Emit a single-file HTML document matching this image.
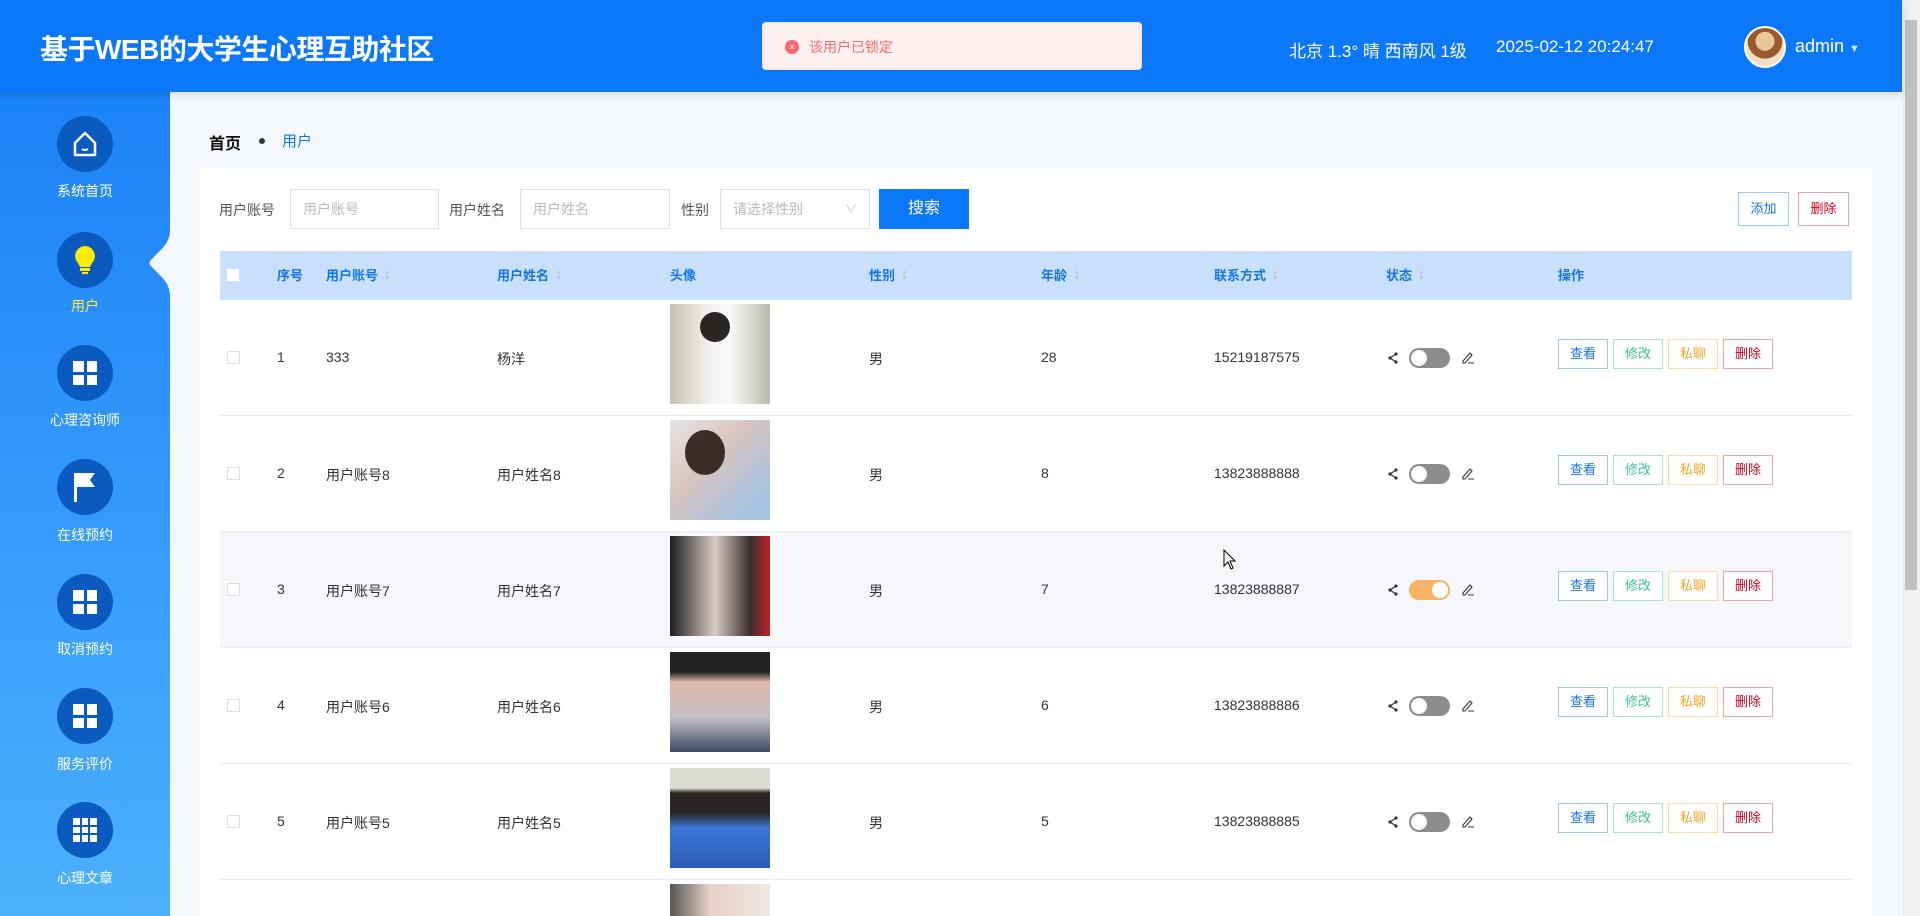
<!DOCTYPE html>
<html style="width:1920px;height:916px;overflow:hidden"><head><meta charset="utf-8"><style>
*{margin:0;padding:0;box-sizing:border-box}
body{width:1920px;height:916px;overflow:hidden;background:#f4f8fd;font-family:"Liberation Sans","Noto Sans CJK SC",sans-serif;font-size:14px;color:#333;position:relative}
.a{position:absolute}
.hdr{left:0;top:0;width:1902px;height:92px;background:#0b78fa;box-shadow:0 2px 8px rgba(0,0,0,.15);z-index:3}
.sb{left:0;top:92px;width:170px;height:824px;background:linear-gradient(#1c82f8,#4cb1fd)}
.ic{left:57px;width:56px;height:56px;border-radius:50%;background:#0b5ac0}
.lb{left:0;width:170px;text-align:center;color:#fff;font-size:14px}
.g4{position:absolute;left:16px;top:16px;width:24px;height:24px;display:grid;grid-template-columns:1fr 1fr;gap:3px}
.g4 i,.g9 i{background:#fff;display:block}
.g9{position:absolute;left:16px;top:16px;width:24px;height:24px;display:grid;grid-template-columns:1fr 1fr 1fr;gap:2px}
.inp{height:40px;border:1px solid #dcdfe6;background:#fff;color:#bbb;font-size:14px;line-height:38px;padding-left:12px}
.th{top:251px;height:49px;line-height:49px;color:#1574e8;font-weight:bold;font-size:13px}
.sort{display:inline-block;margin-left:6px;vertical-align:0px;font-size:7px;line-height:6px;color:#c0c8d4}
.row{left:220px;width:1632px;height:116px;border-bottom:1px solid #e6ebf2;background:#fff}
.c{font-size:14px;color:#333}
.btn{width:50px;height:30px;border:1px solid;font-size:13px;text-align:center;line-height:28px;background:#fff}
.tg{width:41px;height:20px;border-radius:10px;background:#8c8c8c}
.tg i{position:absolute;left:2px;top:2px;width:16px;height:16px;border-radius:50%;background:#fff}
</style></head><body>
<div class="a hdr">
 <div class="a" style="left:40px;top:28px;color:#fff;font-size:28px;font-weight:bold;letter-spacing:-0.5px">基于WEB的大学生心理互助社区</div>
 <div class="a" style="left:1289px;top:37px;color:#fff;font-size:17px">北京 1.3° 晴 西南风 1级</div>
 <div class="a" style="left:1496px;top:37px;color:#fff;font-size:17px">2025-02-12 20:24:47</div>
 <div class="a" style="left:1744px;top:26px;width:42px;height:42px;border-radius:50%;background:radial-gradient(circle at 50% 35%,#e8c79a 0 30%,#9a5a2e 31% 55%,#f1dfc5 56%);border:2px solid #fff"></div>
 <div class="a" style="left:1795px;top:36px;color:#fff;font-size:18px">admin <span style="font-size:11px;color:#cfe3ff">▼</span></div>
</div>
<div class="a" style="left:762px;top:22px;width:380px;height:48px;background:#fef0f0;border:1px solid #fde2e2;border-radius:4px;z-index:4">
 <div class="a" style="left:22px;top:17px;width:14px;height:14px;border-radius:50%;background:#f56c6c;color:#fff;font-size:9px;line-height:14px;text-align:center">×</div>
 <div class="a" style="left:46px;top:14px;color:#f56c6c;font-size:14px">该用户已锁定</div>
</div>
<div class="a" style="left:1902px;top:0;width:18px;height:916px;background:#f0f0f0"><div class="a" style="left:3px;top:20px;width:12px;height:570px;background:#c1c1c1"></div></div>
<div class="a sb">
 <div class="a ic" style="top:24px"><svg width="56" height="56"><path d="M18 27 L28 17 L38 27 V39 H18 Z" fill="none" stroke="#fff" stroke-width="2.5" stroke-linejoin="round"/><path d="M25 33 q3 2 6 0" stroke="#fff" stroke-width="2" fill="none"/></svg></div>
 <div class="a lb" style="top:89px">系统首页</div>
 <div class="a ic" style="top:140px"><svg width="56" height="56"><path d="M28 14 a10 10 0 0 1 7 17 l-2 4 h-10 l-2-4 a10 10 0 0 1 7-17z" fill="#ffec00"/><rect x="23" y="36" width="10" height="3" fill="#ffec00"/><rect x="25" y="40" width="6" height="2" fill="#ffec00"/></svg></div>
 <div class="a lb" style="top:204px;color:#ffec3d">用户</div>
 <svg class="a" style="left:148px;top:138px" width="22" height="66"><path d="M22 0 C22 14 12 20 3 30 Q0 33 3 36 C12 46 22 52 22 66 Z" fill="#f4f8fd"/></svg>
 <div class="a ic" style="top:253px"><div class="g4"><i></i><i></i><i></i><i></i></div></div>
 <div class="a lb" style="top:318px">心理咨询师</div>
 <div class="a ic" style="top:367px"><svg width="56" height="56"><rect x="17" y="14" width="3" height="29" fill="#fff"/><path d="M20 14 H38 L33 21 L38 28 H20Z" fill="#fff"/></svg></div>
 <div class="a lb" style="top:433px">在线预约</div>
 <div class="a ic" style="top:482px"><div class="g4"><i></i><i></i><i></i><i></i></div></div>
 <div class="a lb" style="top:547px">取消预约</div>
 <div class="a ic" style="top:596px"><div class="g4"><i></i><i></i><i></i><i></i></div></div>
 <div class="a lb" style="top:662px">服务评价</div>
 <div class="a ic" style="top:710px"><div class="g9"><i></i><i></i><i></i><i></i><i></i><i></i><i></i><i></i><i></i></div></div>
 <div class="a lb" style="top:776px">心理文章</div>
</div>
<div class="a" style="left:209px;top:130px;font-size:16px;font-weight:bold;color:#111">首页</div>
<div class="a" style="left:259px;top:138px;width:6px;height:6px;border-radius:50%;background:#333"></div>
<div class="a" style="left:282px;top:130px;font-size:15px;color:#1574e8">用户</div>
<div class="a" style="left:200px;top:168px;width:1672px;height:748px;background:#fff"></div>
<div class="a" style="left:219px;top:200px;font-size:14px;color:#555">用户账号</div>
<div class="a inp" style="left:290px;top:189px;width:149px">用户账号</div>
<div class="a" style="left:449px;top:200px;font-size:14px;color:#555">用户姓名</div>
<div class="a inp" style="left:520px;top:189px;width:150px">用户姓名</div>
<div class="a" style="left:681px;top:200px;font-size:14px;color:#555">性别</div>
<div class="a inp" style="left:720px;top:189px;width:150px">请选择性别<span style="position:absolute;right:12px;color:#ccc;font-size:12px">∨</span></div>
<div class="a" style="left:879px;top:189px;width:90px;height:40px;background:#0b78fa;color:#fff;font-size:16px;text-align:center;line-height:40px">搜索</div>
<div class="a btn" style="left:1738px;top:192px;height:34px;line-height:32px;border-color:#9cc6f0;color:#1574e8;width:51px">添加</div>
<div class="a btn" style="left:1798px;top:192px;height:34px;line-height:32px;border-color:#f0a0ae;color:#d0021b;width:51px">删除</div>
<div class="a" style="left:220px;top:251px;width:1632px;height:49px;background:#c8e0fc"></div>
<div class="a" style="left:227px;top:269px;width:12px;height:12px;background:#fff"></div>
<div class="a th" style="left:277px">序号</div>
<div class="a th" style="left:326px">用户账号<span class="sort">▲<br>▼</span></div>
<div class="a th" style="left:497px">用户姓名<span class="sort">▲<br>▼</span></div>
<div class="a th" style="left:670px">头像</div>
<div class="a th" style="left:869px">性别<span class="sort">▲<br>▼</span></div>
<div class="a th" style="left:1041px">年龄<span class="sort">▲<br>▼</span></div>
<div class="a th" style="left:1214px">联系方式<span class="sort">▲<br>▼</span></div>
<div class="a th" style="left:1386px">状态<span class="sort">▲<br>▼</span></div>
<div class="a th" style="left:1558px">操作</div>

<div class="a row" style="top:300px"></div>
<div class="a row" style="top:416px"></div>
<div class="a row" style="top:532px;background:#f5f7fb"></div>
<div class="a row" style="top:648px"></div>
<div class="a row" style="top:764px"></div>
<div class="a row" style="top:880px;height:36px;border:0"></div>

<div class="a" style="left:670px;top:304px;width:100px;height:100px;background:linear-gradient(90deg,#c9c2b2,#f2f2f0 40%,#fafafa 60%,#b8bba8)"><div class="a" style="left:30px;top:8px;width:30px;height:30px;border-radius:50%;background:#2a2624"></div></div>
<div class="a" style="left:670px;top:420px;width:100px;height:100px;background:linear-gradient(135deg,#e8e4e6,#d8c4bc 40%,#a9c4e2 80%)"><div class="a" style="left:15px;top:10px;width:40px;height:45px;border-radius:50%;background:#3a2d2a"></div></div>
<div class="a" style="left:670px;top:536px;width:100px;height:100px;background:linear-gradient(90deg,#1e1e22,#d9cbc4 45%,#3a3030 80%,#c0202a)"></div>
<div class="a" style="left:670px;top:652px;width:100px;height:100px;background:linear-gradient(180deg,#222 0 20%,#e0b8a8 30%,#c4c0c6 65%,#3c4a64)"></div>
<div class="a" style="left:670px;top:768px;width:100px;height:100px;background:linear-gradient(180deg,#d8ddd0 0 20%,#2a2626 25% 45%,#3c78d8 60%,#2c5cb8)"></div>
<div class="a" style="left:670px;top:884px;width:100px;height:32px;background:linear-gradient(90deg,#555,#e8d0c4 40%,#f0e8e4)"></div>

<div id="rows"></div>
<script>
const d=[["1","333","杨洋","28","15219187575",0],["2","用户账号8","用户姓名8","8","13823888888",0],["3","用户账号7","用户姓名7","7","13823888887",1],["4","用户账号6","用户姓名6","6","13823888886",0],["5","用户账号5","用户姓名5","5","13823888885",0]];
let h="";
d.forEach((r,i)=>{const t=300+i*116,y=t+49;
h+=`<div class="a" style="left:227px;top:${y+2}px;width:13px;height:13px;border:1px solid #dcdfe6;background:#fff"></div>
<div class="a c" style="left:277px;top:${y}px">${r[0]}</div>
<div class="a c" style="left:326px;top:${y}px">${r[1]}</div>
<div class="a c" style="left:497px;top:${y}px">${r[2]}</div>
<div class="a c" style="left:869px;top:${y}px">男</div>
<div class="a c" style="left:1041px;top:${y}px">${r[3]}</div>
<div class="a c" style="left:1214px;top:${y}px">${r[4]}</div>
<svg class="a" style="left:1387px;top:${y+2}px" width="12" height="14"><circle cx="9" cy="3" r="1.6" fill="#333"/><circle cx="3" cy="7" r="1.6" fill="#333"/><circle cx="9" cy="11" r="1.6" fill="#333"/><path d="M9 3L3 7L9 11" stroke="#333" stroke-width="1.3" fill="none"/></svg>
<div class="a tg" style="left:1409px;top:${y-1}px;${r[5]?'background:#f8b265':''}"><i style="${r[5]?'left:23px':''}"></i></div>
<svg class="a" style="left:1461px;top:${y+1}px" width="14" height="14"><path d="M2 11 L9 3 L11 5 L4 13 H2Z" fill="none" stroke="#333" stroke-width="1.1"/><path d="M7 13H13" stroke="#333"/></svg>
<div class="a btn" style="left:1558px;top:${y-10}px;border-color:#9cc6f0;color:#1574e8">查看</div>
<div class="a btn" style="left:1613px;top:${y-10}px;border-color:#a8e4d4;color:#3cc39a">修改</div>
<div class="a btn" style="left:1668px;top:${y-10}px;border-color:#fad8a8;color:#f5a623">私聊</div>
<div class="a btn" style="left:1723px;top:${y-10}px;border-color:#f0a0ae;color:#d0021b">删除</div>`;});
document.getElementById("rows").innerHTML=h;
</script>
<svg class="a" style="left:1223px;top:549px" width="14" height="22"><path d="M1 1 V17 L5 13 L8 20 L10 19 L7 12 H12Z" fill="#fff" stroke="#000"/></svg>
</body></html>
